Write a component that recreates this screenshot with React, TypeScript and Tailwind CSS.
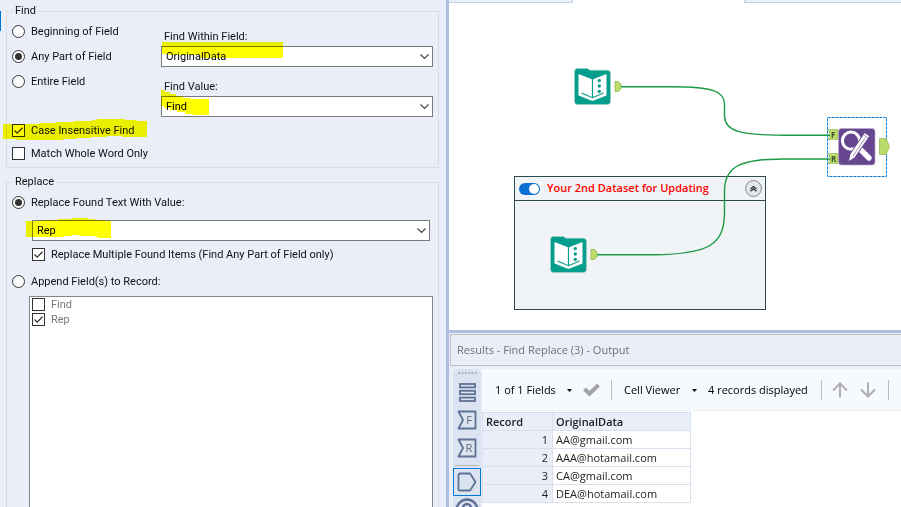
import type { ReactNode } from 'react'

interface OptionProps {
  type: 'radio' | 'checkbox'
  label: string
  name?: string
  checked?: boolean
  className?: string
}

function Option({ type, label, name, checked, className = 'h-[25px]' }: OptionProps) {
  return (
    <label className={`relative flex items-center gap-[6px] whitespace-nowrap ${className}`}>
      <span className="relative flex w-[13px] h-[13px] shrink-0">
        <input
          type={type}
          name={name}
          defaultChecked={checked}
          className={`peer appearance-none w-[13px] h-[13px] bg-white border border-[#333] ${
            type === 'radio' ? 'rounded-full' : ''
          }`}
        />
        <svg
          className="absolute inset-0 w-[13px] h-[13px] hidden peer-checked:block pointer-events-none"
          viewBox="0 0 13 13"
        >
          {type === 'radio' ? (
            <circle cx="6.5" cy="6.5" r="3.5" fill="#333" />
          ) : (
            <path d="M2.5 6.5L5.2 9.2L10.5 3.8" fill="none" stroke="#333" strokeWidth="1.3" />
          )}
        </svg>
      </span>
      <span>{label}</span>
    </label>
  )
}

function SelectBox({ id, value, label }: { id: string; value: string; label?: string }) {
  return (
    <div className="relative">
      <select
        id={id}
        aria-label={label}
        className="block appearance-none w-full h-[21px] pl-1 pr-6 bg-white border border-[#7a7a7a] text-black"
      >
        <option>{value}</option>
      </select>
      <svg
        className="absolute right-1 top-[7px] w-[9px] h-2 pointer-events-none"
        viewBox="0 0 9 8"
        fill="none"
        stroke="#444"
        strokeWidth="1.2"
      >
        <path d="M0.5 1.5L4.5 5.5L8.5 1.5" />
      </svg>
    </div>
  )
}

function Highlight({ className, viewBox, d }: { className: string; viewBox: string; d: string }) {
  return (
    <svg className={`absolute mix-blend-multiply pointer-events-none ${className}`} viewBox={viewBox}>
      <path d={d} fill="#ffff00" />
    </svg>
  )
}

function ConfigPanel() {
  return (
    <form className="relative w-[449px] shrink-0 flex flex-col gap-[6px] pl-[6px] pr-[7px] pt-[3px] bg-[#eaeef9] border-r-[3px] border-[#aebfe0] font-[Roboto,'Liberation_Sans',sans-serif] text-[11px] leading-4 text-[#111]">
      <span className="absolute left-0 top-[11px] w-px h-5 bg-[#0078d7]" />

      <fieldset className="border border-[#dcdcdc] pl-[5px] pr-[5px] pb-[2px]">
        <legend className="ml-[1px] px-[2px]">Find</legend>
        <div className="flex">
          <div className="w-[149px]">
            <Option type="radio" name="match" label="Beginning of Field" />
            <Option type="radio" name="match" label="Any Part of Field" checked />
            <Option type="radio" name="match" label="Entire Field" />
          </div>
          <div className="flex-1 flex flex-col gap-[13px] pt-[11px]">
            <div className="relative">
              <label htmlFor="within" className="block h-4 pl-[3px] leading-[14px]">Find Within Field:</label>
              <SelectBox id="within" value="OriginalData" />
              <Highlight className="left-0 top-3 w-[122px] h-4" viewBox="0 0 122 16" d="M1 0H122V16H39V13H8V12H1Z" />
            </div>
            <div className="relative">
              <label htmlFor="value" className="block h-4 pl-[3px] leading-[14px]">Find Value:</label>
              <SelectBox id="value" value="Find" />
              <Highlight
                className="left-0 top-[10px] w-12 h-[26px]"
                viewBox="0 0 48 26"
                d="M0 0H4V2H9V4H15V6H22V8H29V9H48V25H32V24H24V22H16V20H9V18H3V16H0Z"
              />
            </div>
          </div>
        </div>
        <div className="relative pt-[2px]">
          <Option type="checkbox" label="Case Insensitive Find" checked className="h-[23px]" />
          <Option type="checkbox" label="Match Whole Word Only" className="h-[23px]" />
          <Highlight
            className="-left-[9px] top-[2px] w-36 h-[21px]"
            viewBox="0 0 144 21"
            d="M0 5H36V4H53V3H71V2H89V1H94V0H122V1H134V2H144V18H119V17H104V18H88V19H73V20H60V21H14V20H0Z"
          />
        </div>
      </fieldset>

      <fieldset className="flex-1 min-h-0 flex flex-col border border-b-0 border-[#dcdcdc] pl-[5px] pr-[5px]">
        <legend className="ml-[1px] px-[2px]">Replace</legend>
        <Option type="radio" name="mode" label="Replace Found Text With Value:" checked />
        <div className="relative ml-5 mr-[3px] mt-[5px]">
          <SelectBox id="replace" value="Rep" label="Replacement field" />
          <Highlight
            className="-left-[6px] -top-[2px] w-[85px] h-5"
            viewBox="0 0 85 20"
            d="M0 3H16V2H32V1H46V0H62V1H69V2H79V3H85V20H72V19H69V18H53V17H46V18H38V19H0Z"
          />
        </div>
        <Option
          type="checkbox"
          label="Replace Multiple Found Items (Find Any Part of Field only)"
          checked
          className="ml-5 mt-[2px] h-[23px]"
        />
        <Option type="radio" name="mode" label="Append Field(s) to Record:" className="mt-[3px] h-[25px]" />
        <div className="flex-1 min-h-0 ml-[17px] mt-[2px] pl-[2px] bg-white border border-b-0 border-[#828790] text-[#777]">
          <Option type="checkbox" label="Find" className="h-[15px]" />
          <Option type="checkbox" label="Rep" checked className="h-[15px]" />
        </div>
      </fieldset>
    </form>
  )
}

function InputNode({ className }: { className: string }) {
  return (
    <svg className={`absolute w-12 h-[37px] ${className}`} viewBox="0 0 48 37">
      <path
        d="M3.5 0.5H13.5Q15 2.2 17 2.2H33Q36.5 2.2 36.5 5.5V33.5Q36.5 36.5 33 36.5H3.5Q0.5 36.5 0.5 33.5V3.5Q0.5 0.5 3.5 0.5Z"
        fill="#049e8c"
        stroke="#a5cfc8"
        strokeWidth="0.7"
      />
      <path d="M4.5 6L18.5 11.5L32.5 6V27.5L18.5 33L4.5 27.5Z" fill="#fff" />
      <path d="M18.5 11V29.5M7.5 25L18.5 29.7L29.5 25" fill="none" stroke="#049e8c" strokeWidth="1.2" />
      <circle cx="25.3" cy="12.6" r="1.7" fill="#049e8c" />
      <circle cx="25.3" cy="18" r="1.7" fill="#049e8c" />
      <circle cx="25.3" cy="23.5" r="1.7" fill="#049e8c" />
      <path d="M41 13.5H44.5L47 16V21L44.5 23.5H41Z" fill="#b9dc6a" stroke="#98b958" strokeWidth="0.8" />
    </svg>
  )
}

function FindReplaceNode() {
  return (
    <div className="absolute left-[378px] top-[117px] w-[64px] h-[60px]">
      <svg className="w-[64px] h-[60px]" viewBox="0 0 64 60">
        <rect x="0.5" y="0.5" width="59" height="59" fill="none" stroke="#0078d7" strokeDasharray="3 1" />
        <path d="M1 12.5H11V22.5H1L3.5 17.5Z" fill="#b9dc6a" stroke="#98b958" strokeWidth="0.7" />
        <path d="M1 36.5H11V46.5H1L3.5 41.5Z" fill="#b9dc6a" stroke="#98b958" strokeWidth="0.7" />
        <path d="M52.5 21.5H59L62.5 29.5L59 37.5H52.5Z" fill="#b9dc6a" stroke="#98b958" strokeWidth="0.8" />
        <rect x="11.5" y="11.5" width="36.5" height="36.5" rx="3" fill="#65468f" stroke="#b9aacb" strokeWidth="0.7" />
        <circle cx="24" cy="23.7" r="8.6" fill="none" stroke="#fff" strokeWidth="3" />
        <path d="M34 33L42 41" stroke="#fff" strokeWidth="5.4" strokeLinecap="round" />
        <path d="M37.6 15.6L42.8 19L27.8 40.8L21.4 44.8L22.8 37.4Z" fill="#fff" stroke="#65468f" strokeWidth="1" />
        <path d="M38.6 20.4L26 39M37 18L40.6 20.6" stroke="#65468f" strokeWidth="0.6" />
      </svg>
      <span className="absolute left-[4px] top-[12px] w-[7px] text-[8px] leading-[11px] font-bold text-[#3f5330]">F</span>
      <span className="absolute left-[4px] top-[36px] w-[7px] text-[8px] leading-[11px] font-bold text-[#3f5330]">R</span>
    </div>
  )
}

function Canvas() {
  return (
    <div className="relative h-[330px] shrink-0 bg-white overflow-hidden">
      <div className="flex justify-between h-[3px]">
        <span className="w-[124px] bg-[#eaeef9] border-b border-r border-[#c3d0ea]" />
        <span className="w-[157px] bg-[#eaeef9] border-b border-l border-[#c3d0ea]" />
      </div>

      <section className="absolute left-[65px] top-[176px] w-[252px] h-[134px] bg-[#f0f4f6] border border-[#2c4a50]">
        <header className="flex items-center h-6 pl-1 pr-[3px] border-b border-[#2c4a50]">
          <button type="button" aria-label="Toggle container" className="flex justify-end w-[21px] h-3 p-px rounded-full bg-[#0b6fd6]">
            <span className="w-[10px] h-[10px] rounded-full bg-white" />
          </button>
          <h2 className="flex-1 ml-[7px] text-[11px] font-semibold text-[#ff0000] whitespace-nowrap">
            Your 2nd Dataset for Updating
          </h2>
          <button type="button" aria-label="Collapse container">
            <svg className="block w-[17px] h-[17px]" viewBox="0 0 17 17">
              <circle cx="8.5" cy="8.5" r="7.9" fill="#e3e6ee" stroke="#83858b" strokeWidth="1" />
              <path d="M5.5 9L8.5 6.5L11.5 9M5.5 11.2L8.5 8.7L11.5 11.2" fill="none" stroke="#333" strokeWidth="1.2" />
            </svg>
          </button>
        </header>
      </section>

      <InputNode className="left-[125px] top-[68px]" />
      <InputNode className="left-[101px] top-[236px]" />
      <FindReplaceNode />

      <svg className="absolute left-0 top-0 w-[452px] h-[330px]" viewBox="0 0 452 330" fill="none" stroke="#1c9a46" strokeWidth="1.4">
        <path d="M172 86.8H222C264 87 275.5 91 275.5 104V116C276 131 290 135 335 135.3H381" />
        <path d="M148 254.8H205C260 254 275.5 245 275.5 212V190C276 165 294 159 335 159H381" />
      </svg>
    </div>
  )
}

function SideButton({ label, active, children }: { label: string; active?: boolean; children: ReactNode }) {
  return (
    <button
      type="button"
      aria-label={label}
      className={`flex items-center justify-center w-7 h-7 shrink-0 ${active ? 'border border-[#0078d7]' : ''}`}
    >
      {children}
    </button>
  )
}

function AnchorIcon({ letter }: { letter: string }) {
  return (
    <span className="relative flex w-5 h-5 items-center justify-center">
      <svg className="absolute inset-0 w-5 h-5" viewBox="0 0 20 20" fill="none" stroke="#5f7194" strokeWidth="1.8">
        <path d="M1.5 1.5H18.5V18.5H1.5L6 10Z" strokeLinejoin="round" />
      </svg>
      <span className="relative pl-1 text-[11px] leading-4 text-[#5d6474]">{letter}</span>
    </span>
  )
}

function Caret() {
  return (
    <svg className="w-[5px] h-[3px]" viewBox="0 0 5 3">
      <path d="M0 0H5L2.5 3Z" fill="#000" />
    </svg>
  )
}

const records = ['AA@gmail.com', 'AAA@hotamail.com', 'CA@gmail.com', 'DEA@hotamail.com']

function Results() {
  return (
    <section className="flex-1 min-h-0 flex flex-col pt-px bg-[#eaeef9] border-t-[3px] border-[#aebfe0]">
      <h2 className="h-8 shrink-0 ml-px pl-[6px] border border-r-0 border-[#c0c0c0] text-[11px] leading-[30px] text-[#6d7078]">
        Results - Find Replace (3) - Output
      </h2>
      <div className="flex flex-1 min-h-0 pt-[3px] pl-1">
        <div className="flex flex-col items-center w-7 shrink-0 rounded-t bg-[#dbe3f0] overflow-hidden">
          <svg className="w-[19px] h-[9px] shrink-0" viewBox="0 0 19 9">
            <path d="M0 4H19" stroke="#b3b3b3" strokeWidth="2" strokeDasharray="2 1.4" />
          </svg>
          <SideButton label="Messages">
            <svg className="w-[17px] h-[19px]" viewBox="0 0 17 19" fill="none" stroke="#5f7194" strokeWidth="1.8">
              <rect x="1" y="1" width="15" height="3.4" />
              <rect x="1" y="7.8" width="15" height="3.4" />
              <rect x="1" y="14.6" width="15" height="3.4" />
            </svg>
          </SideButton>
          <SideButton label="Find input"><AnchorIcon letter="F" /></SideButton>
          <SideButton label="Replace input"><AnchorIcon letter="R" /></SideButton>
          <span className="w-6 h-[6px] shrink-0 flex items-center"><span className="w-full h-px bg-[#b8b8b8]" /></span>
          <SideButton label="Output" active>
            <svg className="w-5 h-5" viewBox="0 0 20 20" fill="none" stroke="#5f7194" strokeWidth="1.8">
              <path d="M3 1.5H13L18.5 10L13 18.5H3Q1.5 18.5 1.5 17V3Q1.5 1.5 3 1.5Z" strokeLinejoin="round" />
            </svg>
          </SideButton>
          <SideButton label="Metadata">
            <svg className="w-6 h-6" viewBox="0 0 24 24" fill="none" stroke="#5f7194" strokeWidth="2.4">
              <circle cx="12" cy="12" r="10.5" />
              <circle cx="12" cy="10" r="4" />
            </svg>
          </SideButton>
        </div>

        <div className="flex-1 min-w-0 flex flex-col ml-px bg-white overflow-hidden">
          <div className="flex items-center h-[42px] shrink-0 pl-[13px] pt-px bg-[#f6f9fe] border-b border-[#edf0f5] text-[11px] leading-4 text-black whitespace-nowrap">
            <button type="button" className="flex items-center justify-between w-[77px]">1 of 1 Fields <Caret /></button>
            <button type="button" aria-label="Apply" className="ml-[11px]">
              <svg className="block w-[17px] h-[14px]" viewBox="0 0 17 14" fill="none" stroke="#a2a2a2" strokeWidth="4">
                <path d="M1.5 6L6.5 10.8L15.5 2" />
              </svg>
            </button>
            <span className="w-px h-5 ml-[11px] bg-[#bcbcbc]" />
            <button type="button" className="flex items-center justify-between w-[73px] ml-3">Cell Viewer <Caret /></button>
            <span className="ml-[11px] w-[102px]">4 records displayed</span>
            <span className="w-px h-5 ml-[11px] bg-[#bcbcbc]" />
            <button type="button" aria-label="Previous" className="ml-[10px]">
              <svg className="block w-4 h-4" viewBox="0 0 16 16" fill="none" stroke="#aeaeae" strokeWidth="2">
                <path d="M8 15.5V1.5M1 8.5L8 1.5L15 8.5" />
              </svg>
            </button>
            <button type="button" aria-label="Next" className="ml-3">
              <svg className="block w-4 h-4" viewBox="0 0 16 16" fill="none" stroke="#aeaeae" strokeWidth="2">
                <path d="M8 0.5V14.5M1 7.5L8 14.5L15 7.5" />
              </svg>
            </button>
            <span className="w-px h-5 ml-3 bg-[#bcbcbc]" />
          </div>
          <table className="mt-px w-[209px] table-fixed border-collapse text-[11px] leading-[17px] text-[#222]">
            <thead>
              <tr className="bg-[#e9eef9]">
                <th className="w-[70px] h-[18px] py-0 px-[3px] border border-[#d8e0ef] text-left font-semibold">Record</th>
                <th className="py-0 px-[3px] border border-[#d8e0ef] text-left font-semibold">OriginalData</th>
              </tr>
            </thead>
            <tbody>
              {records.map((email, i) => (
                <tr key={email}>
                  <td className="h-[18px] py-0 px-1 border border-[#d8e0ef] bg-[#e9eef9] text-right">{i + 1}</td>
                  <td className="py-0 px-[3px] border border-[#d8e0ef] bg-white">{email}</td>
                </tr>
              ))}
            </tbody>
          </table>
        </div>
      </div>
    </section>
  )
}

export default function App() {
  return (
    <main className="flex h-screen overflow-hidden bg-white font-['Open_Sans','Noto_Sans',sans-serif]">
      <ConfigPanel />
      <div className="flex-1 min-w-0 flex flex-col">
        <Canvas />
        <Results />
      </div>
    </main>
  )
}
